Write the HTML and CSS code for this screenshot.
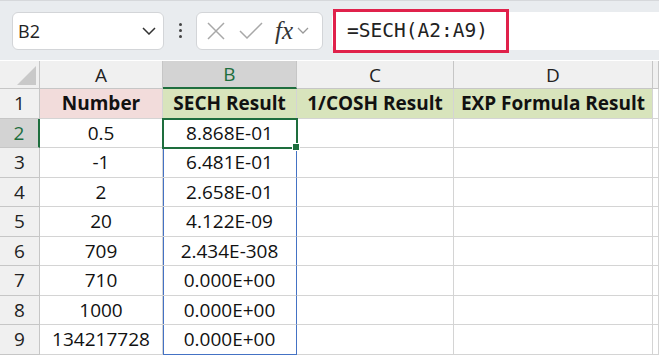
FILE: index.html
```html
<!DOCTYPE html>
<html lang="en">

<head>
    <meta charset="UTF-8">
    <title>SECH Sheet</title>
    <link rel="stylesheet" href="styles.css">
</head>

<body>
    <!-- Name box and formula bar -->
    <div class="toolbar">
        <div class="name-box">
            <span>B2</span>
            <svg class="chev" width="14" height="8" viewBox="0 0 14 8"><path d="M1 1l6 6 6-6" fill="none" stroke="#333" stroke-width="1.5"/></svg>
        </div>
        <div class="dots"><i></i><i></i><i></i></div>
        <div class="fx-box">
            <svg width="18" height="18" viewBox="0 0 18 18"><path d="M1 1l16 16M17 1L1 17" stroke="#a8a8a8" stroke-width="1.5"/></svg>
            <svg width="24" height="18" viewBox="0 0 24 18"><path d="M1 9l7 7L23 1" fill="none" stroke="#a8a8a8" stroke-width="1.5"/></svg>
            <span class="fx">fx</span>
            <svg width="12" height="7" viewBox="0 0 12 7"><path d="M1 1l5 5 5-5" fill="none" stroke="#999" stroke-width="1.3"/></svg>
        </div>
        <div class="formula">
            <span class="formula-text">=SECH(A2:A9)</span>
        </div>
    </div>

    <!-- Sheet -->
    <div class="sheet">
        <div class="row head">
            <div class="corner"></div>
            <div class="col-h">A</div>
            <div class="col-h sel">B</div>
            <div class="col-h">C</div>
            <div class="col-h">D</div>
            <div class="col-h"></div>
        </div>
        <div class="row">
            <div class="row-h">1</div>
            <div class="cell th pink">Number</div>
            <div class="cell th green">SECH Result</div>
            <div class="cell th green">1/COSH Result</div>
            <div class="cell th green">EXP Formula Result</div>
            <div class="cell"></div>
        </div>
        <div class="row">
            <div class="row-h sel">2</div>
            <div class="cell">0.5</div>
            <div class="cell active">8.868E-01</div>
            <div class="cell"></div>
            <div class="cell"></div>
            <div class="cell"></div>
        </div>
        <div class="row">
            <div class="row-h">3</div>
            <div class="cell">-1</div>
            <div class="cell ref">6.481E-01</div>
            <div class="cell"></div>
            <div class="cell"></div>
            <div class="cell"></div>
        </div>
        <div class="row">
            <div class="row-h">4</div>
            <div class="cell">2</div>
            <div class="cell ref">2.658E-01</div>
            <div class="cell"></div>
            <div class="cell"></div>
            <div class="cell"></div>
        </div>
        <div class="row">
            <div class="row-h">5</div>
            <div class="cell">20</div>
            <div class="cell ref">4.122E-09</div>
            <div class="cell"></div>
            <div class="cell"></div>
            <div class="cell"></div>
        </div>
        <div class="row">
            <div class="row-h">6</div>
            <div class="cell">709</div>
            <div class="cell ref">2.434E-308</div>
            <div class="cell"></div>
            <div class="cell"></div>
            <div class="cell"></div>
        </div>
        <div class="row">
            <div class="row-h">7</div>
            <div class="cell">710</div>
            <div class="cell ref">0.000E+00</div>
            <div class="cell"></div>
            <div class="cell"></div>
            <div class="cell"></div>
        </div>
        <div class="row">
            <div class="row-h">8</div>
            <div class="cell">1000</div>
            <div class="cell ref">0.000E+00</div>
            <div class="cell"></div>
            <div class="cell"></div>
            <div class="cell"></div>
        </div>
        <div class="row">
            <div class="row-h">9</div>
            <div class="cell">134217728</div>
            <div class="cell ref last">0.000E+00</div>
            <div class="cell"></div>
            <div class="cell"></div>
            <div class="cell"></div>
        </div>
    </div>
</body>

</html>
```

FILE: styles.css
```css
body {
    margin: 0;
    font-family: "Open Sans", "Noto Sans", sans-serif;
    background: #fff;
    color: #111;
    overflow: hidden;
}

.toolbar {
    display: flex;
    align-items: center;
    height: 60px;
    padding-left: 12px;
    background: #e9ecef;
    border-top: 1px solid #d6d8db;
    box-sizing: border-box;
}

.name-box {
    display: flex;
    align-items: center;
    justify-content: space-between;
    width: 152px;
    height: 38px;
    padding: 0 7px 0 5px;
    box-sizing: border-box;
    background: #fff;
    border: 1px solid #d3d5d8;
    border-radius: 6px;
    font-size: 18px;
    color: #222;
}

.dots {
    display: flex;
    flex-direction: column;
    gap: 3px;
    width: 32px;
    align-items: center;
}

.dots i {
    width: 3px;
    height: 3px;
    border-radius: 50%;
    background: #444;
}

.fx-box {
    display: flex;
    align-items: center;
    width: 127px;
    height: 38px;
    padding: 0 5px 0 10px;
    box-sizing: border-box;
    background: #fff;
    border: 1px solid #d3d5d8;
    border-radius: 6px;
}

.fx-box svg:nth-child(2) {
    margin-left: 14px;
}

.fx {
    font-family: "Liberation Serif", serif;
    font-style: italic;
    font-size: 25px;
    color: #333;
    margin-left: 12px;
    margin-right: 4px;
    line-height: 1;
}

.formula {
    flex: 1;
    height: 38px;
    margin-left: 9px;
    background: #fff;
    border-radius: 6px 0 0 6px;
    display: flex;
    align-items: center;
}

.formula-text {
    font-family: "DejaVu Sans Mono", monospace;
    font-size: 19.5px;
    color: #222;
    line-height: 40px;
    height: 40px;
    padding: 0 19px 0 12px;
    margin-left: 3px;
    outline: 3px solid #e0214b;
    outline-offset: -1px;
}

.sheet {
    margin-top: 1px;
}

.row {
    display: grid;
    grid-template-columns: 40px 123px 134px 157px 199px 6px;
    height: 29.5px;
}

.row.head {
    height: 28px;
}

.row > div {
    border-right: 1px solid #d4d4d4;
    border-bottom: 1px solid #d4d4d4;
    display: flex;
    align-items: center;
    justify-content: center;
    font-size: 19px;
    position: relative;
    box-sizing: border-box;
}

.corner {
    background: #f0f0f0;
    border-color: #c6c6c6 !important;
}

.corner::after {
    content: "";
    position: absolute;
    right: 3px;
    bottom: 3px;
    border-style: solid;
    border-width: 0 0 19px 19px;
    border-color: transparent transparent #c9c9c9 transparent;
}

.col-h {
    background: #f0f0f0;
    color: #222;
    border-color: #c6c6c6 !important;
}

.col-h.sel {
    background: #d3d3d3;
    color: #1e6e3e;
    border-bottom: 2px solid #1e6e3e !important;
}

.row-h {
    background: #f0f0f0;
    color: #222;
    border-color: #c6c6c6 !important;
}

.row-h.sel {
    background: #d3d3d3;
    color: #1e6e3e;
    border-right: 2px solid #1e6e3e !important;
}

.th {
    font-weight: 700;
}

.pink {
    background: #f2dcdb;
}

.green {
    background: #d8e4bc;
}

.active {
    outline: 2px solid #1e6e3e;
    outline-offset: -1px;
    z-index: 2;
}

.active::after {
    content: "";
    position: absolute;
    right: -4px;
    bottom: -4px;
    width: 6px;
    height: 6px;
    background: #1e6e3e;
    border: 1px solid #fff;
}

.ref {
    box-shadow: inset 1px 0 0 #4472c4;
    border-right-color: #4472c4 !important;
}

.ref.last {
    border-bottom-color: #4472c4 !important;
}
```
